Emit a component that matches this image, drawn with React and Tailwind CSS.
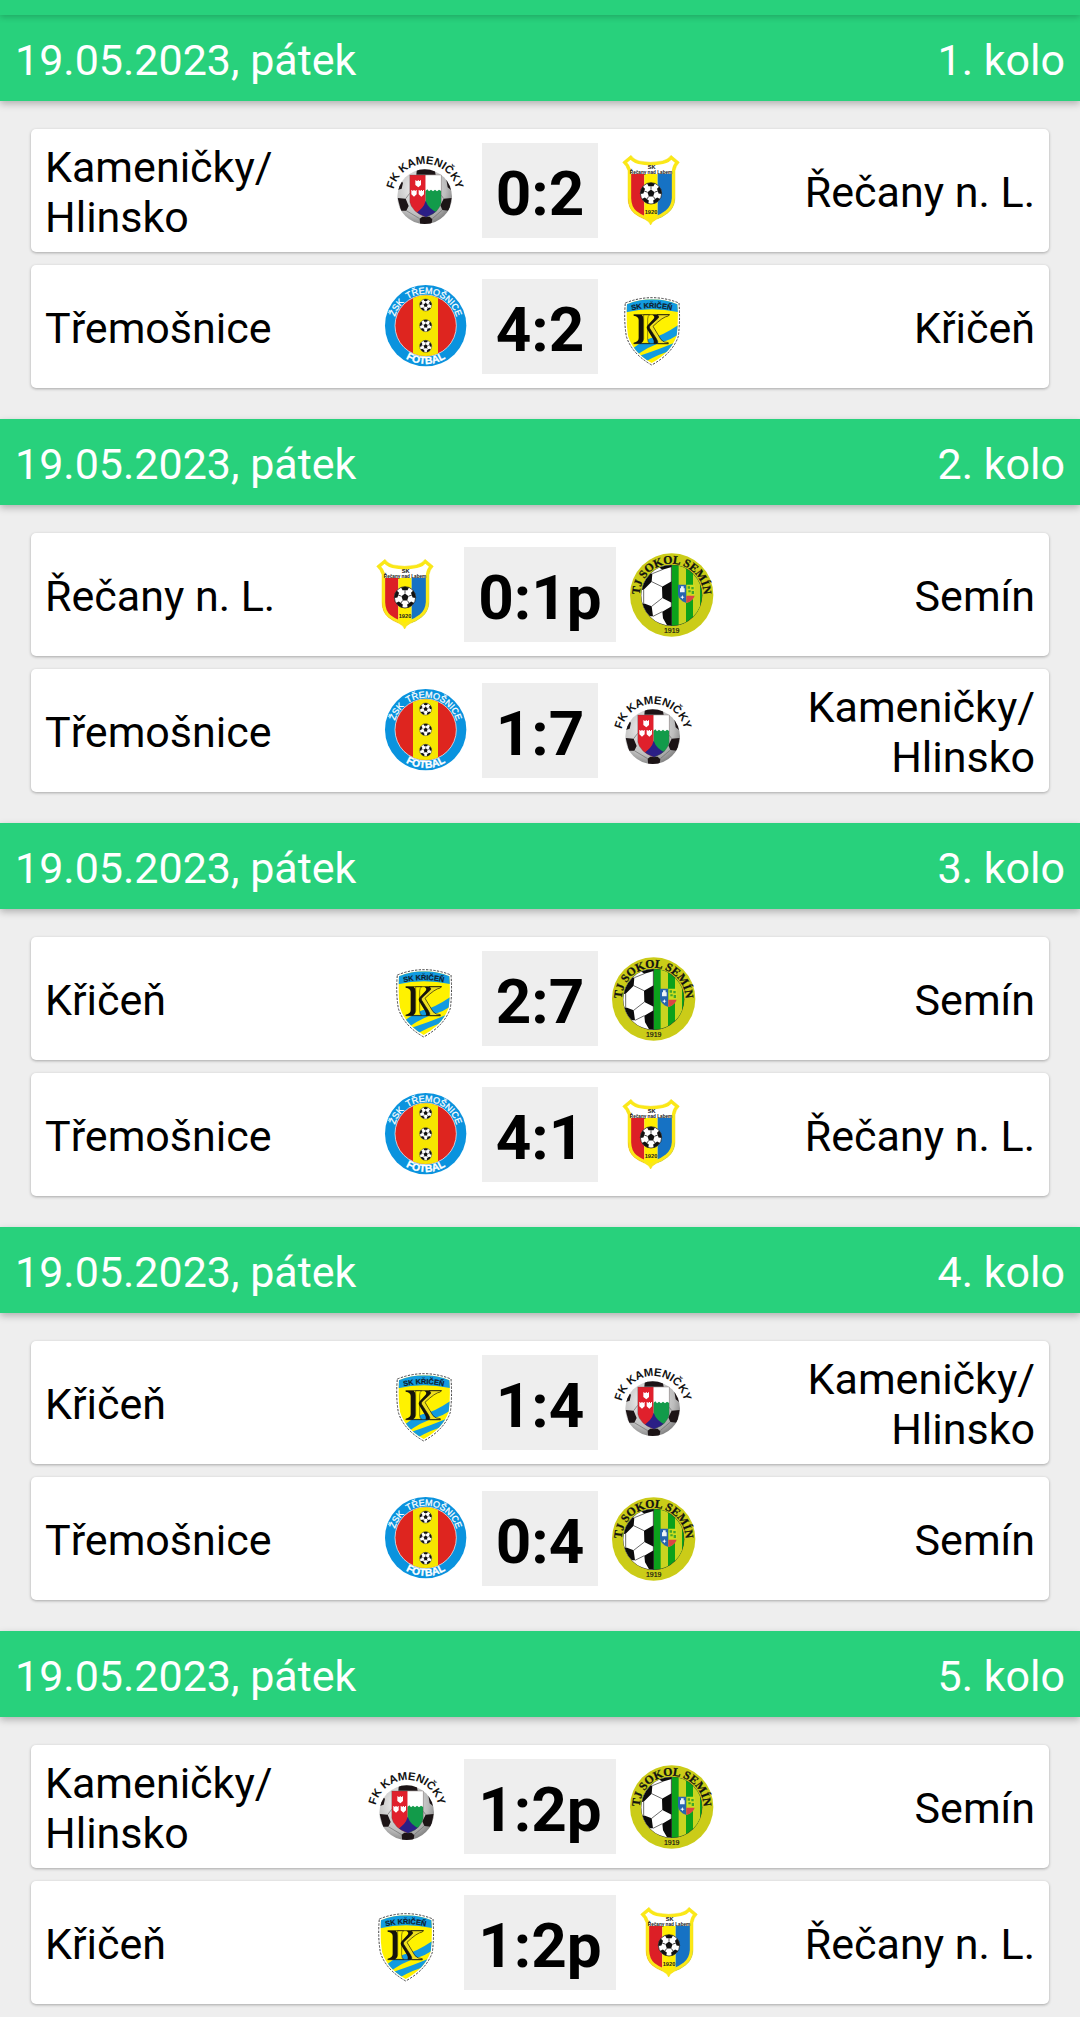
import { useId } from "react";

function Ball({ cx, cy, r }) {
  return (
    <g transform={`translate(${cx} ${cy}) scale(${r / 30})`}>
      <circle r="30" fill="#fff" stroke="#111" strokeWidth="2" />
      <path d="M0-11 10-3 6 9-6 9-10-3Z" fill="#111" />
      {[0, 72, 144, 216, 288].map((a) => (
        <g key={a} transform={`rotate(${a})`}>
          <path d="M0-11V-20" stroke="#111" strokeWidth="2" />
          <path d="M-11-28 0-30 11-28 7-20H-7Z" fill="#111" />
        </g>
      ))}
    </g>
  );
}

function KamenickyLogo() {
  const id = useId();
  return (
    <svg viewBox="39 57 252 252" className="size-[84px] shrink-0 overflow-visible" role="img" aria-label="FK Kameničky">
      <defs>
        <radialGradient id={id + "g"} cx="0.4" cy="0.35" r="0.75">
          <stop offset="0" stopColor="#fafafa" />
          <stop offset="0.65" stopColor="#bdbdbd" />
          <stop offset="1" stopColor="#6e6e6e" />
        </radialGradient>
        <clipPath id={id + "b"}>
          <circle cx="161" cy="200" r="82" />
        </clipPath>
        <clipPath id={id + "s"}>
          <path d="M116 135H211V215Q208 245 165 262Q122 245 116 215Z" />
        </clipPath>
        <path id={id + "t"} d="M66 198A96 96 0 0 1 258 198" />
      </defs>
      <circle cx="161" cy="200" r="82" fill={`url(#${id}g)`} />
      <g clipPath={`url(#${id}b)`}>
        <path
          d="M138 114H190L194 134H136ZM80 180 88 152 96 158 92 176ZM80 204 104 206 113 228 106 242 90 242ZM242 204 218 206 208 226 214 240 234 242ZM226 148 238 160 240 180 230 172ZM146 266 154 260 176 260 184 268 180 290H148Z"
          fill="#1c1416"
        />
        <path d="M106 242 146 266M184 266 214 240M104 206 116 190M218 206 211 196" stroke="#6b6b6b" strokeWidth="2" />
      </g>
      <g clipPath={`url(#${id}s)`}>
        <path d="M110 130H164V270H110Z" fill="#e0202c" />
        <path d="M164 130H216V184H164Z" fill="#fff" />
        <path d="M164 182 169 178 174 184 180 179 186 184 192 179 198 184 204 179 212 184V270H164Z" fill="#129b4a" />
        <path d="M164 212Q158 238 128 252L140 270H190L204 250Q172 238 164 212Z" fill="#2b1f86" />
        <path
          d="M133 151H136V153H140V151H144V153H147V151H150V165L142 172 133 165ZM121 180H124V183H127V180H131V183H134V180H137V193L129 200 121 193ZM143 180H146V183H149V180H153V183H156V180H159V193L151 200 143 193Z"
          fill="#fff"
        />
      </g>
      <path d="M116 135H211V215Q208 245 165 262Q122 245 116 215Z" fill="none" stroke="#5a4a4a" strokeWidth="1" />
      <text fontFamily="Liberation Sans, sans-serif" fontWeight="700" fontSize="34" fill="#111">
        <textPath href={`#${id}t`} startOffset="50%" textAnchor="middle">FK KAMENIČKY</textPath>
      </text>
    </svg>
  );
}

const RECANY =
  "M71 97 96 76Q104 89 120 93Q155 101 190 93Q208 89 216 76L241 97Q230 108 228 122V205Q226 235 205 250Q190 262 172 268Q160 273 155 285Q150 273 138 268Q118 260 106 250Q88 235 87 205V122Q83 108 71 97Z";

function RecanyLogo() {
  const id = useId();
  return (
    <svg viewBox="39 57 252 252" className="size-[84px] shrink-0 overflow-visible" role="img" aria-label="SK Řečany nad Labem">
      <defs>
        <clipPath id={id}>
          <path d={RECANY} />
        </clipPath>
      </defs>
      <path d={RECANY} fill="#fff" />
      <g clipPath={`url(#${id})`}>
        <path d="M80 132H136V290H80Z" fill="#dc1f26" />
        <path d="M136 132H176V290H136Z" fill="#ffee00" />
        <path d="M176 132H232V290H176Z" fill="#1672c4" />
        <path d={RECANY} fill="none" stroke="#fbe817" strokeWidth="19" />
      </g>
      <path d={RECANY} fill="none" stroke="#f0de1a" strokeWidth="1.5" />
      <text x="158" y="117" textAnchor="middle" fontFamily="Liberation Sans, sans-serif" fontWeight="700" fontSize="17" fill="#111">SK</text>
      <text x="156" y="132" textAnchor="middle" fontFamily="Liberation Sans, sans-serif" fontWeight="700" fontSize="14" fill="#111">Řečany nad Labem</text>
      <Ball cx={156} cy={190} r={32} />
      <text x="156" y="252" textAnchor="middle" fontFamily="Liberation Sans, sans-serif" fontWeight="700" fontSize="17" fill="#222">1920</text>
    </svg>
  );
}

function TremosniceLogo() {
  const id = useId();
  return (
    <svg viewBox="39 45 252 252" className="size-[84px] shrink-0 overflow-visible" role="img" aria-label="ŽSK Třemošnice">
      <defs>
        <clipPath id={id + "c"}>
          <circle cx="164" cy="167" r="91" />
        </clipPath>
        <path id={id + "t"} d="M68 167A96 96 0 0 1 260 167" />
        <path id={id + "f"} d="M49 167A115 115 0 0 0 279 167" />
      </defs>
      <circle cx="164" cy="167" r="122" fill="#0a93de" />
      <circle cx="164" cy="167" r="92" fill="#de251f" stroke="#fff" strokeWidth="2" />
      <path d="M126 60H201V274H126Z" fill="#f6e600" clipPath={`url(#${id}c)`} />
      <Ball cx={164} cy={105} r={18} />
      <Ball cx={164} cy={167} r={18} />
      <Ball cx={164} cy={229} r={18} />
      <text fontFamily="Liberation Sans, sans-serif" fontSize="27" fill="#fff" stroke="#fff" strokeWidth="0.8">
        <textPath href={`#${id}t`} startOffset="50%" textAnchor="middle">{"ŽSK\u00a0 TŘEMOŠNICE"}</textPath>
      </text>
      <text fontFamily="Liberation Sans, sans-serif" fontWeight="700" fontSize="31" fill="#fff" stroke="#fff" strokeWidth="1">
        <textPath href={`#${id}f`} startOffset="50%" textAnchor="middle">FOTBAL</textPath>
      </text>
    </svg>
  );
}

const KRICEN = "M79 98Q118 82 159 82Q200 82 240 98Q244 150 238 198Q220 250 158 284Q98 250 82 198Q74 150 79 98Z";

function KricenLogo() {
  const id = useId();
  return (
    <svg viewBox="39 44 252 252" className="size-[84px] shrink-0 overflow-visible" role="img" aria-label="SK Křičeň">
      <defs>
        <clipPath id={id + "c"}>
          <path d="M84 102Q120 87 159 87Q199 87 235 102Q239 150 233 196Q216 246 158 278Q102 246 87 196Q80 150 84 102Z" />
        </clipPath>
        <path id={id + "t"} d="M84 123Q158 103 232 123" />
      </defs>
      <path d={KRICEN} fill="#fff" stroke="#222" strokeWidth="2.5" strokeDasharray="7 4" />
      <g clipPath={`url(#${id}c)`}>
        <path d="M70 80H250V290H70Z" fill="#fff200" />
        <path d="M70 80H250V128Q158 106 70 128Z" fill="#129be0" />
        <path d="M244 160Q190 198 154 204Q120 216 84 250L100 264Q150 226 190 216Q220 206 244 188Z" fill="#129be0" />
        <path d="M244 210Q190 234 118 258L136 276Q180 250 244 232Z" fill="#129be0" />
      </g>
      <text fontFamily="Liberation Sans, sans-serif" fontWeight="700" fontSize="22" fill="#10202c" stroke="#10202c" strokeWidth="0.6">
        <textPath href={`#${id}t`} startOffset="50%" textAnchor="middle">SK KŘIČEŇ</textPath>
      </text>
      <g strokeLinejoin="round" stroke="#15130c">
        <path d="M104 133H128Q134 137 134 148V206Q134 216 124 220H104V217Q119 214 119 203V149Q119 138 104 136Z" fill="#15130c" strokeWidth="0" />
        <path d="M134 133H152Q146 137 146 146V206Q146 216 152 219H124Q134 215 134 205Z" fill="#fff200" strokeWidth="1.5" />
        <path d="M174 133H211L208 137Q192 139 162 168L186 208Q194 217 208 217V220H176Q178 214 172 205L152 174Q149 170 154 165L178 143Q182 137 174 133Z" fill="#f0e020" strokeWidth="2" />
        <path d="M160 133H174Q182 137 177 144L153 166Q149 170 152 174L172 205Q178 214 174 220H164Q167 214 162 206L144 176Q141 170 146 165L164 145Q169 138 160 133Z" fill="#15130c" strokeWidth="0" />
        <path d="M104 133H212M104 220H208" fill="none" strokeWidth="2" />
      </g>
    </svg>
  );
}

function SeminLogo() {
  const id = useId();
  return (
    <svg viewBox="63 36 252 252" className="size-[84px] shrink-0 overflow-visible" role="img" aria-label="TJ Sokol Semín">
      <defs>
        <clipPath id={id + "c"}>
          <circle cx="188" cy="163" r="91" />
        </clipPath>
        <path id={id + "t"} d="M92 164A96 96 0 0 1 284 164" />
      </defs>
      <circle cx="188" cy="162" r="125" fill="#cbcc18" />
      <circle cx="188" cy="163" r="92" fill="#333" />
      <g clipPath={`url(#${id}c)`}>
        <path d="M90 70H188V256H90Z" fill="#fff" />
        <path d="M188 70H282V256H188Z" fill="#0ba11b" />
        <path d="M209 70H231V256H209ZM252 70H273V256H252Z" fill="#c9d420" />
        <path
          d="M159 137 188 121V185L160 171ZM160 212 188 196V256H176L162 232ZM90 120 112 94 130 98 128 122 104 146 92 148ZM92 186 108 188 128 196 132 226 112 226 90 210ZM138 70H188V78L160 86Z"
          fill="#0b0b0b"
        />
        <path d="M128 122 159 137M130 98 160 86M104 146V188M128 196 160 171M132 226 160 212" fill="none" stroke="#222" strokeWidth="2" />
        <path d="M187 70V256" stroke="#222" strokeWidth="2" />
      </g>
      <path d="M207 131H232V186Q208 178 207 160Z" fill="#2765ae" />
      <path d="M232 131H258V160Q256 178 232 186Z" fill="#ccdd20" />
      <path d="M232 164H257Q252 180 232 186Z" fill="#da4545" />
      <path d="M213 154V142H216V136H224V142H227V154Z" fill="#eef3f8" />
      <path d="M220 162 222 167 227 168 222 170 220 175 218 170 213 168 218 167Z" fill="#fff" />
      <path d="M236 136H243V143H236ZM247 138H254V145H247ZM238 148H245V154H238ZM248 150H255V159H248Z" fill="#42a52c" />
      <text fontFamily="Liberation Serif, serif" fontWeight="700" fontSize="35" fill="#111" stroke="#111" strokeWidth="0.8">
        <textPath href={`#${id}t`} startOffset="50%" textAnchor="middle">TJ SOKOL SEMÍN</textPath>
      </text>
      <text x="188" y="275" textAnchor="middle" fontFamily="Liberation Sans, sans-serif" fontSize="21" fill="#111" stroke="#111" strokeWidth="0.5">1919</text>
    </svg>
  );
}

const TEAMS = {
  kamenicky: { lines: ["Kameničky/", "Hlinsko"], Logo: KamenickyLogo },
  recany: { lines: ["Řečany n. L."], Logo: RecanyLogo },
  tremosnice: { lines: ["Třemošnice"], Logo: TremosniceLogo },
  kricen: { lines: ["Křičeň"], Logo: KricenLogo },
  semin: { lines: ["Semín"], Logo: SeminLogo },
};

const ROUNDS = [
  [["kamenicky", "0:2", "recany"], ["tremosnice", "4:2", "kricen"]],
  [["recany", "0:1p", "semin"], ["tremosnice", "1:7", "kamenicky"]],
  [["kricen", "2:7", "semin"], ["tremosnice", "4:1", "recany"]],
  [["kricen", "1:4", "kamenicky"], ["tremosnice", "0:4", "semin"]],
  [["kamenicky", "1:2p", "semin"], ["kricen", "1:2p", "recany"]],
];

function TeamName({ lines, align }) {
  return (
    <div className={`min-w-0 flex-1 pt-0.5 text-[43px] leading-[50px] ${align}`}>
      {lines.map((line) => (
        <span key={line} className="block whitespace-nowrap">{line}</span>
      ))}
    </div>
  );
}

function Match({ home, score, away }) {
  const h = TEAMS[home];
  const a = TEAMS[away];
  return (
    <li className="flex min-h-[123px] items-center rounded-[5px] bg-white px-[14px] py-2 shadow-[0_1px_3px_rgba(0,0,0,0.3)]">
      <TeamName lines={h.lines} align="text-left" />
      <h.Logo />
      <div className="mx-[14px] bg-[#eeeeee] px-[14px] pt-[14px] pb-[7px] text-[62px] leading-[74px] font-bold">{score}</div>
      <a.Logo />
      <TeamName lines={a.lines} align="text-right" />
    </li>
  );
}

export default function App() {
  return (
    <main className="min-h-screen bg-[#eeeeee] font-['Roboto',sans-serif] text-black">
      <div className="relative z-10 h-[15px] bg-[#28d17c] shadow-[0_2px_6px_rgba(0,0,0,0.2)]" />
      {ROUNDS.map((matches, i) => (
        <section key={i} className="pb-[31px] last:pb-3">
          <header className="flex justify-between bg-[#28d17c] px-[15px] pt-5 pb-4 text-[43px] leading-[50px] text-white shadow-[0_3px_7px_rgba(0,0,0,0.25)]">
            <h2>19.05.2023, pátek</h2>
            <span>{i + 1}. kolo</span>
          </header>
          <ul className="flex flex-col gap-[13px] px-[31px] pt-7">
            {matches.map(([home, score, away]) => (
              <Match key={home} home={home} score={score} away={away} />
            ))}
          </ul>
        </section>
      ))}
    </main>
  );
}
